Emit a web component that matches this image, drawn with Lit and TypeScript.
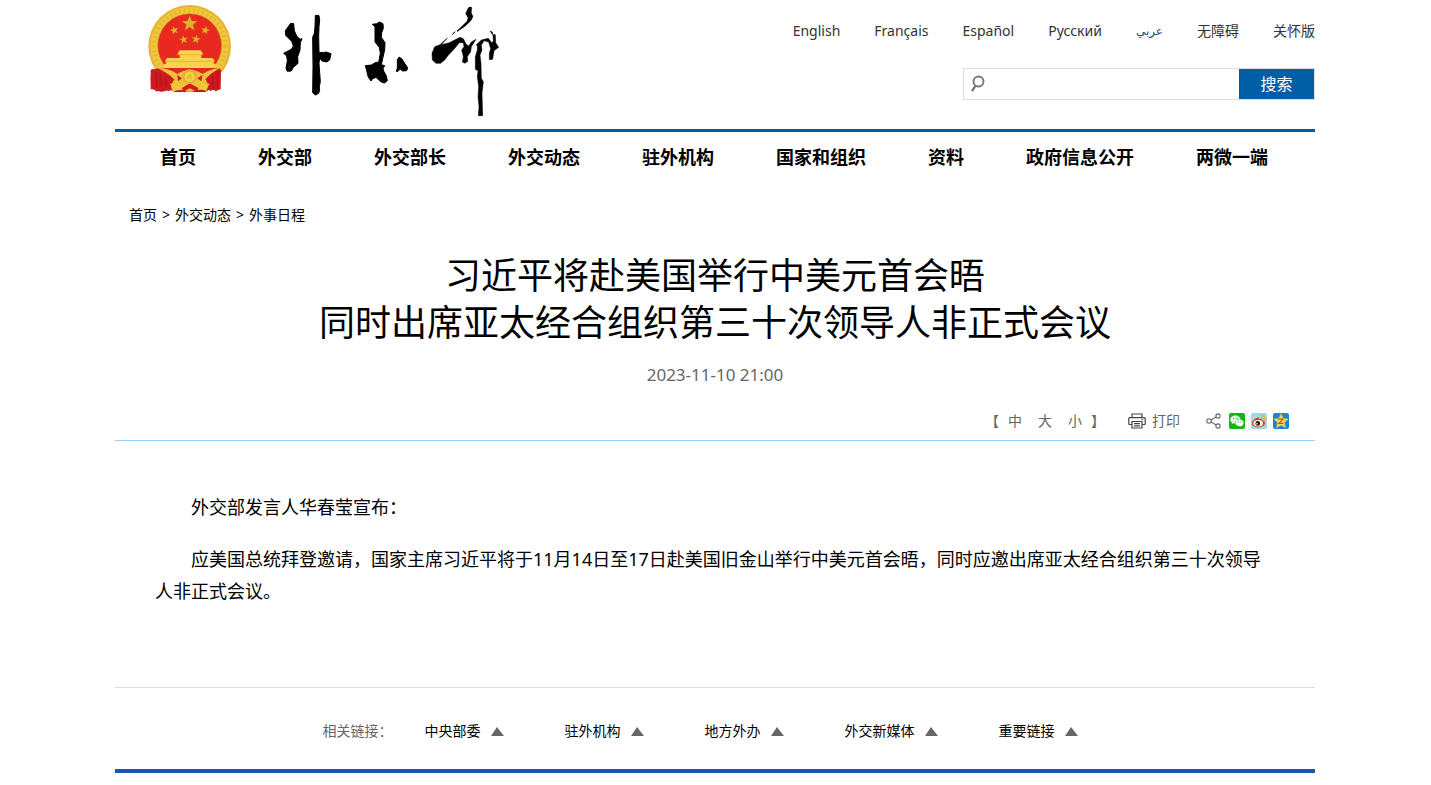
import { LitElement, html, svg, css } from "lit";
import { customElement, state } from "lit/decorators.js";

interface Lang { label: string; lang: string; arabic?: boolean }

const LANGS: Lang[] = [
  { label: "English", lang: "en" },
  { label: "Français", lang: "fr" },
  { label: "Español", lang: "es" },
  { label: "Русский", lang: "ru" },
  { label: "عربي", lang: "ar", arabic: true },
  { label: "无障碍", lang: "zh" },
  { label: "关怀版", lang: "zh" },
];
const NAV = ["首页", "外交部", "外交部长", "外交动态", "驻外机构", "国家和组织", "资料", "政府信息公开", "两微一端"];
const CRUMBS = ["首页", "外交动态", "外事日程"];
const RELATED = ["中央部委", "驻外机构", "地方外办", "外交新媒体", "重要链接"];

const star = (x: number, y: number, r: number, turn = 0) => {
  const pts: string[] = [];
  for (let i = 0; i < 10; i++) {
    const a = ((i * 36 - 90 + turn) * Math.PI) / 180;
    const d = i % 2 ? r * 0.42 : r;
    pts.push(`${(x + d * Math.cos(a)).toFixed(1)},${(y + d * Math.sin(a)).toFixed(1)}`);
  }
  return svg`<polygon points=${pts.join(" ")}></polygon>`;
};

const emblem = html`<svg class="emblem" viewBox="0 0 300 300" role="img" aria-label="国徽">
  <path d="M34 208 Q30 240 34 266 L62 275 L92 270 L104 276 L196 276 L206 270 L238 270 L243 208Z" fill="#c5161d"></path>
  <circle cx="149" cy="139" r="124" fill="#e6b42c"></circle>
  <circle cx="149" cy="139" r="118" fill="#efc63c"></circle>
  <circle cx="149" cy="139" r="108" fill="none" stroke="#e6b534" stroke-width="12" stroke-dasharray="5 9"></circle>
  <circle cx="149" cy="137" r="96" fill="#e9291f" stroke="#d29a20" stroke-width="2"></circle>
  <g fill="#e2b12d" stroke="#c98a1a" stroke-width="1">
    ${star(149, 71, 24)}${star(103, 91, 13, -15)}${star(196, 91, 13, 15)}${star(131, 119, 13, -10)}${star(168, 118, 13, 10)}
  </g>
  <path d="M119 151 H182 L190 163 H184 V174 H218 L224 184 H221 V191 H227 V204 H72 V191 H78 V184 H75 L81 174 H119 V163 H112Z" fill="#f8d44b"></path>
  <path d="M112 164 H188 M76 184 H224" stroke="#eeb03a" stroke-width="3"></path>
  <path d="M62 204 H236 L212 226 H88Z" fill="#e0291f"></path>
  <path d="M58 204 Q88 206 112 222 Q130 210 149 210 Q170 210 188 222 Q214 206 240 204 L243 214 Q214 220 196 236 Q180 254 149 254 Q120 254 104 236 Q86 220 56 214Z" fill="#edc13b"></path>
  <path d="M32 211 L54 205 Q78 216 103 238 L96 250 L89 274 L75 268 L70 275 L60 269 L49 275 L43 267 L32 268Z" fill="#cf181f"></path>
  <path d="M243 211 L240 205 Q216 216 196 238 L203 250 L210 274 L221 268 L228 275 L234 267 L242 268Z" fill="#cf181f"></path>
  <path d="M47 216 L51 264 M60 222 L66 265 M76 230 L79 260 M233 218 L232 266 M217 228 L220 264" stroke="#a5141b" stroke-width="3" fill="none"></path>
  <path d="M91 251 Q120 244 139 257 L154 257 Q174 245 208 251 L199 273 Q176 265 157 275 H141 Q120 265 98 276Z" fill="#efc33c"></path>
  <path d="M126 264 L149 250 L175 264 L171 276 L149 265 L130 276Z" fill="#d71920"></path>
  <circle cx="149" cy="230" r="22" fill="#e6b534"></circle>
  <circle cx="149" cy="230" r="17" fill="#f5d04a" stroke="#d39a25" stroke-width="2"></circle>
  <circle cx="149" cy="230" r="8" fill="#eabb38"></circle>
  <path d="M112 225 L126 235 L114 244 Z M187 225 L172 235 L184 244Z" fill="#d71920"></path>
</svg>`;

const wordmark = html`<svg class="wordmark" viewBox="0 0 720 375" role="img" aria-label="外交部">
  <g fill="#000" stroke="#000" stroke-width="3" stroke-linejoin="round">
    <path d="M62 70L71 71 73 92 80 108 90 118 96 116 91 128 90 150 83 170 84 190 70 202 64 213 52 214 48 205 52 182 50 168 41 160 50 155 64 148 70 138 65 124 47 106 46 92Z"></path>
    <path d="M136 46L147 47 149 60 147 80 146 110 147 157 160 158 168 156 183 161 179 180 170 186 156 183 149 174 147 190 151 245 148 260 149 270 146 280 136 285 128 278 129 200 128 112 133 100 135 80Z"></path>
    <path d="M307 73L320 71 328 66 339 71 340 85 335 98 334 112 345 128 344 150 337 180 334 194 344 197 339 206 342 215 349 228 352 242 343 249 332 245 318 232 308 236 303 243 295 232 290 212 286 197 304 195 318 187 326 187 331 160 328 142 315 126 315 80Z"></path>
    <path d="M387 171L396 177 404 190 413 203 410 212 398 213 390 207 384 214 379 214 382 204 382 180Z"></path>
    <g transform="translate(420 0)">
      <path d="M176 23L184 22 183 38 188 50 182 62 165 78 141 94 172 64 175 54 168 40Z"></path>
      <path stroke-width="1.500" d="M136 95L127 104 129 100ZM112 114L90 134 74 140 66 160 67 180 78 190 92 190 104 180 116 164 130 150 148 128 160 128 162 140 155 150 160 170 157 186 165 190 173 184 172 170 182 155 184 140 198 118 184 126 176 138 168 132 160 116 150 112 138 118 118 128 94 134Z"></path>
      <path stroke-width="1.500" d="M199 134L214 120 235 115 245 128 250 124 249 106 240 93 247 96 249 104 256 104 257 128 266 142 252 152 248 178 238 179 238 160 242 146 236 126 222 122 214 136 216 150 210 165 213 190 214 235 220 245 216 280 218 347 205 347 207 320 204 290 206 260 202 230 204 212 196 208 196 170 202 150 202 138Z"></path>
    </g>
  </g>
</svg>`;

@customElement("app-root")
export class AppRoot extends LitElement {
  @state() private size = 18;

  static styles = css`
    :host {
      display: block;
      box-sizing: border-box;
      min-height: 100vh;
      padding-right: 1px;
      background: #fff;
      color: #000;
      font-family: "Noto Sans", "Noto Sans CJK SC", sans-serif;
      font-size: 14px;
      line-height: 20px;
    }
    a { color: inherit; text-decoration: none; }
    a:hover { color: #005ea7; }
    button { font: inherit; border: 0; padding: 0; background: none; color: inherit; cursor: pointer; }
    svg { display: block; flex: none; }
    .page { max-width: 1200px; margin: 0 auto; }
    .header {
      display: flex;
      justify-content: space-between;
      align-items: flex-start;
      padding: 0 0 4px 25px;
      border-bottom: 3px solid #005ea7;
    }
    .brand { display: flex; gap: 30px; }
    .emblem { width: 100px; height: 100px; }
    .wordmark { width: 240px; height: 125px; }
    .tools { display: flex; flex-direction: column; align-items: flex-end; gap: 27px; padding-top: 21px; }
    .langs { display: flex; gap: 34px; color: #333; }
    .arabic { color: #1c4a7c; font-family: "DejaVu Sans", sans-serif; font-size: 12px; }
    .search {
      display: flex;
      box-sizing: border-box;
      width: 352px;
      height: 32px;
      border: 1px solid #ddd;
    }
    .field { display: flex; flex: 1; align-items: center; gap: 6px; padding-left: 6px; }
    .field input { flex: 1; min-width: 0; border: 0; padding: 0; outline: none; font: inherit; background: none; }
    .go { width: 75px; background: #005ea7; color: #fff; font-size: 16px; }
    .nav { display: flex; flex-wrap: wrap; gap: 0 62px; padding: 12px 45px; font-size: 18px; line-height: 26px; font-weight: 700; }
    .crumbs { display: flex; gap: 5px; padding: 23px 14px 0; }
    h1 { margin: 27px 0 0; font-size: 36px; line-height: 47px; font-weight: 400; text-align: center; }
    .line { display: block; }
    .date { margin: 17px 0 0; font-size: 17px; line-height: 24px; text-align: center; color: #666; }
    .actions {
      display: flex;
      justify-content: flex-end;
      align-items: center;
      padding: 24px 26px 9px;
      border-bottom: 1px solid #99ccff;
      color: #666;
    }
    .sizes { display: flex; gap: 16px; }
    .bracket { display: flex; gap: 9px; margin-right: 23px; }
    .print { display: flex; align-items: center; gap: 6px; margin-right: 26px; }
    .share { display: flex; align-items: center; gap: 6px; }
    .share-mark { margin-right: 2px; }
    .body { padding: 50px 40px 80px; line-height: 32px; }
    .body p { margin: 0 0 20px; text-indent: 2em; }
    .body p:last-child { margin: 0; }
    .related {
      display: flex;
      justify-content: center;
      gap: 32px;
      padding: 33px 0 28px;
      border-top: 1px solid #ddd;
      border-bottom: 4px solid #1357b9;
    }
    .related-label { color: #666; }
    .related-list { display: flex; gap: 61px; padding-right: 30px; }
    .drop { display: flex; align-items: center; gap: 10px; }
    .drop::after { content: ""; border: solid transparent; border-width: 0 7px 9px 6px; border-bottom-color: #666; }
  `;

  private icons() {
    return html`
      <a href="#" aria-label="微信"><svg width="16" height="16" viewBox="0 0 16 16">
        <rect width="16" height="16" rx="2" fill="#10b716"></rect>
        <path d="M6.4 2.5C3.600 2.500 1.200 4.300 1.200 6.600c0 1.300.8 2.400 1.900 3.100l-.5 1.600 1.900-1c.7.2 1.200.2 1.900.2 2.800 0 5.100-1.800 5.100-4s-2.300-4-5.100-4Z" fill="#e9f9e7"></path>
        <path d="M10.500 6.200c-2.400 0-4.300 1.600-4.300 3.600s1.900 3.600 4.300 3.600c.5 0 1-.1 1.500-.2l1.500.9-.4-1.400c1-.7 1.700-1.700 1.700-2.900 0-2-1.900-3.600-4.300-3.600Z" fill="#fff" stroke="#10b716" stroke-width=".5"></path>
        <g fill="#10b716"><circle cx="4.700" cy="5.400" r=".7"></circle><circle cx="8" cy="5.400" r=".7"></circle><circle cx="9.200" cy="8.900" r=".6"></circle><circle cx="12" cy="8.900" r=".6"></circle></g>
      </svg></a>
      <a href="#" aria-label="微博"><svg width="16" height="16" viewBox="0 0 16 16">
        <rect width="16" height="16" rx="2" fill="#9bdbe8"></rect>
        <path d="M10 4.400a3 3 0 0 1 3.300 3.300M10 2.100a5.200 5.200 0 0 1 5 5.500" fill="none" stroke="#eeb42e" stroke-width="1.200"></path>
        <path d="M6.500 4.600c1-.4 1.800 0 1.500 1.500 1.800-.8 3.600-.6 3.200 1.200 1.700.4 2.800 1.300 2.800 2.800 0 2.500-3 4.300-6.600 4.300S1 12.800 1 10.300c0-2.200 2.800-4.800 5.500-5.700Z" fill="#e43d1b"></path>
        <ellipse cx="7.200" cy="10.300" rx="4.700" ry="3.200" fill="#fff"></ellipse>
        <circle cx="6.800" cy="10.400" r="2.400" fill="#1a1a1a"></circle><circle cx="6" cy="10.800" r=".8" fill="#fff"></circle>
      </svg></a>
      <a href="#" aria-label="QQ空间"><svg width="16" height="16" viewBox="0 0 16 16">
        <rect width="16" height="16" rx="2" fill="#1586dc"></rect>
        <path d="M8 .7l2.200 4.700 5 .6-3.700 3.500 1 5.300L8 12.200l-4.500 2.600 1-5.300L.8 6l5-.6Z" fill="#fbd657" stroke="#f0b53a" stroke-width=".6"></path>
        <path d="M5.500 6.200h4.500l-4 4.200h4.500" fill="none" stroke="#a56b13" stroke-width="1.200"></path>
      </svg></a>`;
  }

  render() {
    return html`<div class="page">
      <header class="header">
        <div class="brand">${emblem}${wordmark}</div>
        <div class="tools">
          <div class="langs">
            ${LANGS.map((l) => html`<a href="#" lang=${l.lang} class=${l.arabic ? "arabic" : ""}>${l.label}</a>`)}
          </div>
          <form class="search" @submit=${(e: Event) => e.preventDefault()}>
            <label class="field">
              <svg width="16" height="18" viewBox="0 0 16 18" fill="none" stroke="#777">
                <circle cx="8.500" cy="6.500" r="5" stroke-width="1.900"></circle>
                <path d="M5.300 11.200L2 16" stroke-width="2.300"></path>
              </svg>
              <input type="text" aria-label="搜索" />
            </label>
            <button class="go" type="submit">搜索</button>
          </form>
        </div>
      </header>
      <nav class="nav">${NAV.map((n) => html`<a href="#">${n}</a>`)}</nav>
      <div class="crumbs">
        ${CRUMBS.map((c, i) => html`${i ? html`<span>&gt;</span>` : ""}<a href="#">${c}</a>`)}
      </div>
      <main>
        <h1><span class="line">习近平将赴美国举行中美元首会晤</span><span class="line">同时出席亚太经合组织第三十次领导人非正式会议</span></h1>
        <p class="date">2023-11-10 21:00</p>
        <div class="actions">
          <div class="bracket">
            <span>【</span>
            <div class="sizes">
              <button @click=${() => (this.size = 18)}>中</button>
              <button @click=${() => (this.size = 20)}>大</button>
              <button @click=${() => (this.size = 16)}>小</button>
            </div>
            <span>】</span>
          </div>
          <button class="print" @click=${() => window.print()}>
            <svg width="18" height="16" viewBox="0 0 18 16" fill="none" stroke="#444" stroke-width="1.200">
              <path d="M4 4.500V1h10v3.500M4 11.500H1.600a.8.8 0 0 1-.8-.8V5.400a.8.8 0 0 1 .8-.8h14.800a.8.8 0 0 1 .8.8v5.300a.8.8 0 0 1-.8.8H14M4 8.500h10V15H4ZM6 10.700h6M6 12.800h6M13.500 6.500H15"></path>
            </svg>
            打印
          </button>
          <div class="share">
            <svg class="share-mark" width="15" height="16" viewBox="0 0 15 16" fill="none" stroke="#666" stroke-width="1.100">
              <circle cx="3" cy="8" r="2.200"></circle><circle cx="12" cy="3" r="2.100"></circle><circle cx="12" cy="13" r="2.100"></circle>
              <path d="M5 7l5.200-3M5 9l5.200 3"></path>
            </svg>
            ${this.icons()}
          </div>
        </div>
        <article class="body" style="font-size:${this.size}px">
          <p>外交部发言人华春莹宣布：</p>
          <p>应美国总统拜登邀请，国家主席习近平将于11月14日至17日赴美国旧金山举行中美元首会晤，同时应邀出席亚太经合组织第三十次领导人非正式会议。</p>
        </article>
      </main>
      <footer class="related">
        <span class="related-label">相关链接：</span>
        <div class="related-list">${RELATED.map((r) => html`<button class="drop">${r}</button>`)}</div>
      </footer>
    </div>`;
  }
}
